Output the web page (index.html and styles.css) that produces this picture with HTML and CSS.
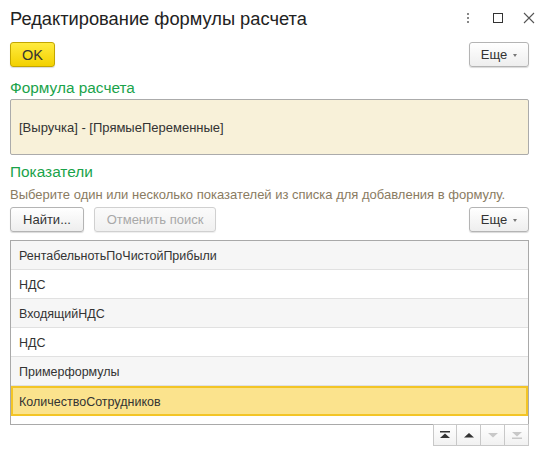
FILE: index.html
```html
<!DOCTYPE html>
<html lang="ru">
<head>
<meta charset="utf-8">
<link rel="stylesheet" href="styles.css">
</head>
<body>
<div class="win">
  <div class="header">
    <div class="title">Редактирование формулы расчета</div>
    <div class="chrome">
      <svg class="ic" width="12" height="14" viewBox="0 0 12 14"><rect x="5" y="2" width="2" height="2" fill="#888"/><rect x="5" y="6" width="2" height="2" fill="#888"/><rect x="5" y="10" width="2" height="2" fill="#888"/></svg>
      <svg class="ic" width="14" height="14" viewBox="0 0 14 14"><rect x="2.5" y="2.5" width="9" height="9" fill="none" stroke="#333" stroke-width="1"/></svg>
      <svg class="ic" width="14" height="14" viewBox="0 0 14 14"><path d="M2 2 L12 12 M12 2 L2 12" stroke="#555" stroke-width="1.1"/></svg>
    </div>
  </div>
  <div class="toolbar top">
    <button class="btn ok">OK</button>
    <button class="btn more">Еще <span class="caret"></span></button>
  </div>
  <div class="label">Формула расчета</div>
  <div class="formula">[Выручка] - [ПрямыеПеременные]</div>
  <div class="label second">Показатели</div>
  <div class="hint">Выберите один или несколько показателей из списка для добавления в формулу.</div>
  <div class="toolbar">
    <button class="btn find">Найти...</button>
    <button class="btn cancel">Отменить поиск</button>
    <button class="btn more push">Еще <span class="caret"></span></button>
  </div>
  <div class="table">
    <div class="row alt">РентабельнотьПоЧистойПрибыли</div>
    <div class="row">НДС</div>
    <div class="row alt">ВходящийНДС</div>
    <div class="row">НДС</div>
    <div class="row alt">Примерформулы</div>
    <div class="row sel">КоличествоСотрудников</div>
  </div>
  <div class="nav">
    <div class="nb"><svg width="10" height="8" viewBox="0 0 10 8"><rect x="0" y="0" width="10" height="1.5" fill="#333"/><path d="M0 7 L5 2.5 L10 7 Z" fill="#333"/></svg></div>
    <div class="nb"><svg width="10" height="8" viewBox="0 0 10 8"><path d="M0 6.5 L5 2 L10 6.5 Z" fill="#333"/></svg></div>
    <div class="nb"><svg width="10" height="8" viewBox="0 0 10 8"><path d="M0 2 L5 6.5 L10 2 Z" fill="#c8c8c8"/></svg></div>
    <div class="nb"><svg width="10" height="8" viewBox="0 0 10 8"><path d="M0 1 L5 5.5 L10 1 Z" fill="#c8c8c8"/><rect x="0" y="6.5" width="10" height="1.5" fill="#c8c8c8"/></svg></div>
  </div>
</div>
</body>
</html>
```
FILE: styles.css
```css
* { box-sizing: border-box; }
html, body { margin: 0; padding: 0; background: #fff; }
body { font-family: "Liberation Sans", Arial, sans-serif; color: #333; }
.win { width: 538px; height: 450px; padding: 0 9px 0 10px; }
.header { height: 36px; display: flex; align-items: center; justify-content: space-between; }
.title { font-size: 18.3px; color: #222; padding-top: 1px; }
.chrome { display: flex; align-items: center; gap: 17px; margin-right: -7px; }
.ic { display: block; }
.toolbar { display: flex; gap: 10px; height: 25px; }
.toolbar.top { margin-top: 6px; justify-content: space-between; }
.btn {
  font-family: "Liberation Sans", Arial, sans-serif;
  font-size: 13px;
  color: #333;
  height: 25px;
  border: 1px solid #b4b4b4;
  border-radius: 3px;
  background: linear-gradient(#ffffff, #eeeeee);
  box-shadow: 0 1px 1px rgba(0,0,0,0.15);
  padding: 0 10px;
  display: flex; align-items: center; justify-content: center;
}
.ok {
  width: 45px;
  background: linear-gradient(#ffeb3f, #f3d100);
  border-color: #c3a600;
  font-size: 14.5px;
  color: #333;
}
.more { width: 60px; padding: 0 8px; gap: 6px; }
.caret { width: 0; height: 0; border-left: 2.5px solid transparent; border-right: 2.5px solid transparent; border-top: 3px solid #777; margin-top: 1px; }
.push { margin-left: auto; }
.find { width: 74px; }
.cancel { width: 122px; color: #a8a8a8; background: linear-gradient(#fbfbfb, #f0f0f0); border-color: #d0d0d0; box-shadow: 0 1px 1px rgba(0,0,0,0.07); }
.label { color: #1aa34a; font-size: 15.4px; height: 18px; line-height: 18px; margin-top: 12px; }
.label.second { margin-top: 8px; }
.formula {
  margin-top: 2px;
  height: 56px;
  background: #f8f1d9;
  border: 1px solid #ababab;
  border-radius: 2px;
  font-size: 13px;
  color: #333;
  padding: 0 8px;
  display: flex; align-items: center;
  padding-top: 1px;
}
.hint { font-size: 13px; color: #8a7b62; height: 16px; line-height: 16px; margin-top: 6px; margin-bottom: 4px; }
.table {
  margin-top: 8px;
  height: 185px;
  border: 1px solid #a9a9a9;
  padding-top: 0;
}
.row {
  height: 29px;
  border-bottom: 1px solid #e1e1e1;
  font-size: 12.5px;
  color: #333;
  padding: 1px 8px 0;
  display: flex; align-items: center;
}
.row.alt { background: #f6f6f6; }
.row.sel { background: #fbe38d; border: 2px solid #f3c526; padding: 1px 6px 0; height: 30px; }
.nav { display: flex; justify-content: flex-end; margin-top: -1px; }
.nb {
  width: 24px; height: 22px;
  border: 1px solid #c8c8c8;
  border-left: none;
  background: linear-gradient(#ffffff, #f1f1f1);
  display: flex; align-items: center; justify-content: center;
}
.nb:first-child { border-left: 1px solid #c8c8c8; }
```
